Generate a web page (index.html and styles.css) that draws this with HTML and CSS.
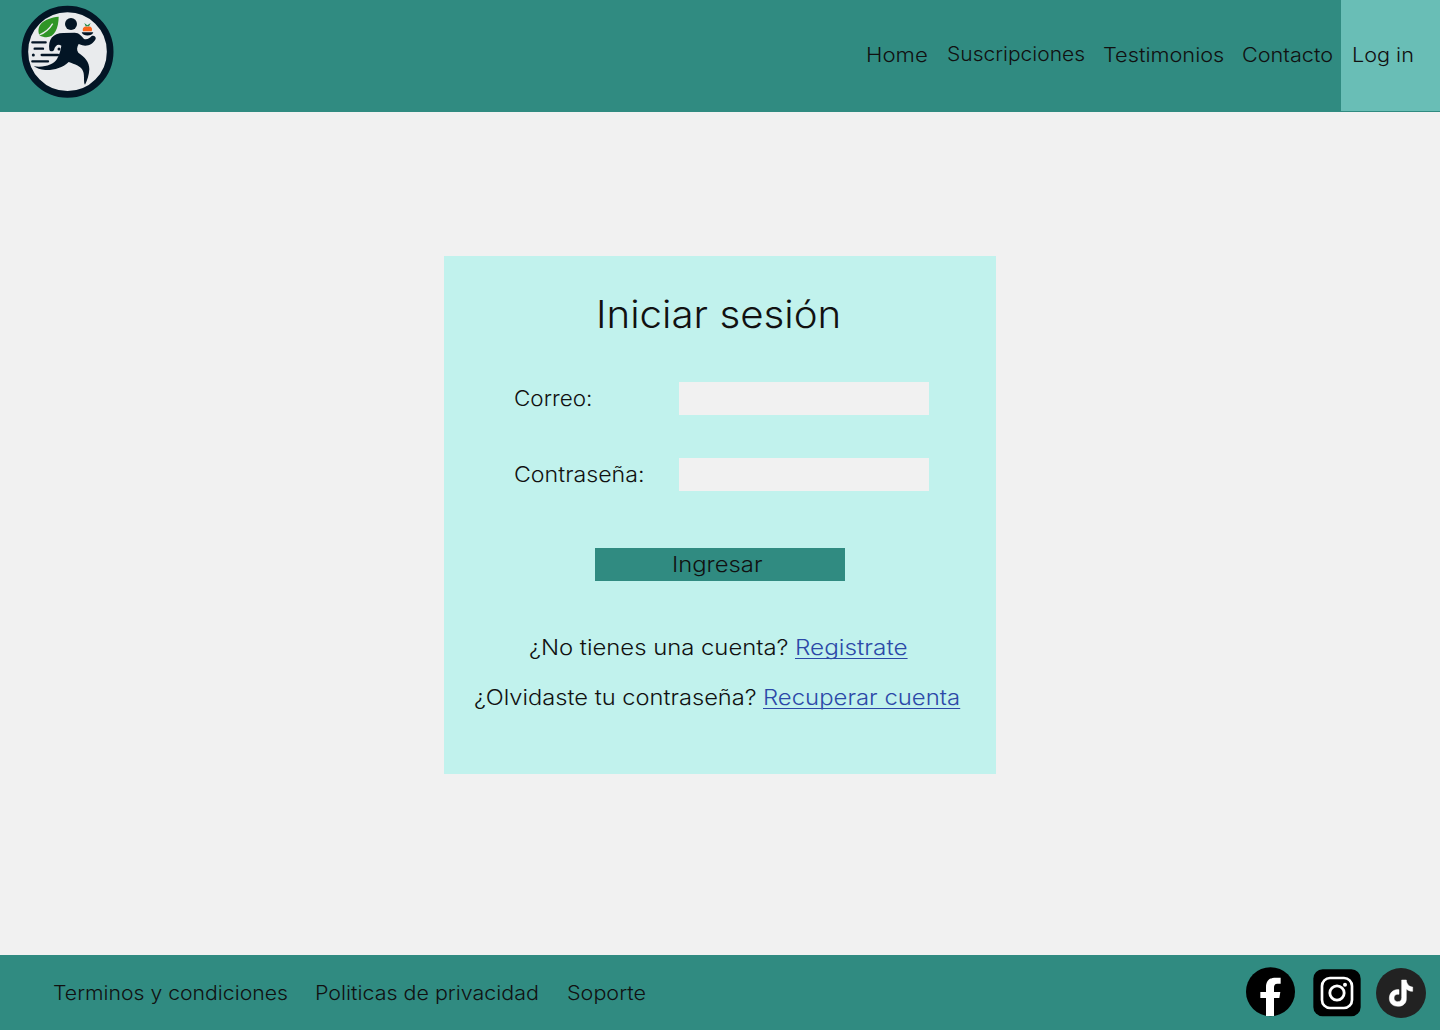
FILE: index.html
```html
<!DOCTYPE html>
<html lang="es">
<head>
<meta charset="utf-8">
<title>Iniciar sesión</title>
<link rel="stylesheet" href="styles.css">
</head>
<body>
<header class="header">
  <a class="logo" href="#" aria-label="Inicio">
    <svg viewBox="0 0 345 336" width="115" height="112">
      <circle cx="172.500" cy="155" r="128" fill="#e9ebed" stroke="#031525" stroke-width="20"/>
      <path d="M88 105C78 75 100 55 146 50C146 88 130 119 99 110L91 108Z" fill="#2f9526"/>
      <path d="M88 105C106 98 119 86 128 71" fill="none" stroke="#e9ebed" stroke-width="4"/>
      <g fill="#031525">
        <circle cx="183" cy="72" r="18"/>
        <path d="M118 149C114 119 128 99 160 99L194 98C207 98 216 109 222 117C231 120 239 115 245 108C251 105 259 109 257 117C249 132 234 140 217 136L206 132C201 141 199 150 205 158C225 171 238 186 238 208C237 226 232 241 225 254C220 248 224 229 220 216C214 197 194 193 176 186C157 204 132 211 106 210C91 209 80 205 71 199C106 203 130 194 141 177C149 162 152 150 154 137C145 130 135 136 132 150C129 155 120 155 118 149Z"/>
        <path d="M215 97H250C246 110 219 110 215 97Z"/>
        <circle cx="70" cy="165" r="4.500"/><circle cx="147" cy="147" r="4.500"/>
      </g>
      <path d="M67 127H107M74 146H99M95 165H144M67 184H114" stroke="#031525" stroke-width="7" stroke-linecap="round"/>
      <path d="M219 94C216 82 224 78 233 80C243 78 249 85 245 94Z" fill="#fa651b"/>
      <path d="M223 69L232 76L242 69L237 79H227Z" fill="#278b48"/>
    </svg>
  </a>
  <nav class="nav">
    <a class="nav-link nav-home" href="#"><span class="wide">Home</span></a>
    <a class="nav-link nav-plans" href="#"><span class="wide">Suscripciones</span></a>
    <a class="nav-link nav-reviews" href="#"><span class="wide">Testimonios</span></a>
    <a class="nav-link nav-contact" href="#"><span class="wide">Contacto</span></a>
    <a class="nav-link nav-login" href="#"><span class="wide">Log in</span></a>
  </nav>
</header>
<main class="main">
  <form class="card">
    <h1 class="title"><span class="wide">Iniciar sesión</span></h1>
    <div class="field"><label class="label label-mail" for="mail"><span class="wide">Correo:</span></label><input class="input" id="mail" type="email"></div>
    <div class="field"><label class="label label-pass" for="pass"><span class="wide">Contraseña:</span></label><input class="input" id="pass" type="password"></div>
    <button class="submit" type="button"><span class="wide">Ingresar</span></button>
    <p class="help help-register"><span class="ask"><span class="wide">¿No tienes una cuenta?</span></span><a class="help-link wide" href="#">Registrate</a></p>
    <p class="help help-recover"><span class="ask"><span class="wide">¿Olvidaste tu contraseña?</span></span><a class="help-link wide" href="#">Recuperar cuenta</a></p>
  </form>
</main>
<footer class="footer">
  <div class="legal">
    <a class="legal-link legal-terms" href="#"><span class="wide">Terminos y condiciones</span></a>
    <a class="legal-link legal-privacy" href="#"><span class="wide">Politicas de privacidad</span></a>
    <a class="legal-link legal-support" href="#"><span class="wide">Soporte</span></a>
  </div>
  <div class="social">
    <svg viewBox="0 0 615 225" width="205" height="75">
      <circle cx="106.500" cy="110" r="73.500" fill="#000"/>
      <path d="M93 183V129H76V111H93V97C93 76 105 68 122 68H137V86H127C119 86 117 91 117 98V111H136L133 129H117V183Z" fill="#fff"/>
      <rect x="235" y="43" width="142" height="141" rx="28" fill="#000"/>
      <rect x="261" y="69" width="90" height="90" rx="24" fill="none" stroke="#fff" stroke-width="8"/>
      <circle cx="306" cy="114" r="21.500" fill="none" stroke="#fff" stroke-width="8.500"/>
      <circle cx="330" cy="89" r="6" fill="#fff"/>
      <circle cx="498" cy="114" r="75" fill="#222"/>
      <path d="M500 75H514C515 88 522 95 533 96V109C525 109 519 106 514 102V131C514 145 504 154 489 154C474 154 463 145 463 130C463 114 475 102 492 104V118C483 116 477 121 477 129C477 136 482 140 488 140C496 140 500 135 500 128Z" fill="#fff" stroke="#fff" stroke-width="1.500"/>
    </svg>
  </div>
</footer>
</body>
</html>
```
FILE: styles.css
```css
* { box-sizing: border-box; }

body {
  margin: 0;
  min-height: 1030px;
  display: flex;
  flex-direction: column;
  background: #f1f1f1;
  color: #111;
  font-family: Inter, "Open Sans", sans-serif;
  font-weight: 350;
}

a { color: inherit; text-decoration: none; }

/* Extended letterforms; each label sets its own --stretch. */
.wide {
  display: inline-block;
  transform: scaleX(var(--stretch, 1.1));
  transform-origin: left center;
}

.header {
  height: 112px;
  display: flex;
  justify-content: space-between;
  padding-left: 10px;
  background: #308b81;
}

.logo { display: block; width: 115px; height: 112px; }
.logo svg, .social svg { display: block; }

.nav { display: flex; height: 111px; }

.nav-link {
  font-size: 19.500px;
  line-height: 110px;
  white-space: nowrap;
}

.nav-home { width: 81px; --stretch: 1.138; }
.nav-plans { width: 156px; line-height: 108px; --stretch: 1.078; }
.nav-reviews { width: 139px; --stretch: 1.115; }
.nav-contact { width: 99px; --stretch: 1.11; }
.nav-login { width: 99px; padding-left: 11px; background: #69beb6; --stretch: 1.108; }

.main {
  flex: 1;
  display: flex;
  justify-content: center;
  align-items: flex-start;
  padding-top: 144px;
}

.card {
  width: 552px;
  height: 518px;
  padding-top: 34px;
  display: flex;
  flex-direction: column;
  background: #c1f2ed;
}

.title {
  margin: 0 0 42px;
  padding-left: 152px;
  font-size: 37.500px;
  font-weight: 350;
  line-height: 50px;
  white-space: nowrap;
  --stretch: 1.073;
}

.field { display: flex; height: 33px; margin-bottom: 43px; padding-left: 70px; }

.label {
  width: 165px;
  font-size: 21.300px;
  line-height: 33px;
}

.label-mail { --stretch: 1.054; }
.label-pass { --stretch: 1.088; }

.input { width: 250px; height: 33px; border: 0; padding: 0 8px; background: #f1f1f1; font: inherit; }

.submit {
  width: 250px;
  height: 33px;
  margin: 14px 0 50px 151px;
  padding: 0 0 0 77px;
  border: 0;
  background: #308b81;
  color: #111;
  font-family: inherit;
  font-size: 21.300px;
  font-weight: 350;
  line-height: 33px;
  text-align: left;
  --stretch: 1.118;
}

.help {
  display: flex;
  margin: 0 0 17px;
  font-size: 21.300px;
  line-height: 33px;
  white-space: nowrap;
}

.help-register { padding-left: 85px; }
.help-register .ask { width: 266px; --stretch: 1.119; }
.help-register .help-link { --stretch: 1.142; }
.help-recover { padding-left: 30px; }
.help-recover .ask { width: 289px; --stretch: 1.11; }
.help-recover .help-link { --stretch: 1.1225; }

.help-link {
  color: #2c49a8;
  text-decoration: underline;
  text-decoration-thickness: 1px;
  text-decoration-skip-ink: none;
  text-underline-offset: 3px;
}

.footer {
  height: 75px;
  display: flex;
  justify-content: space-between;
  background: #308b81;
}

.legal { display: flex; padding-left: 53px; }

.legal-link {
  font-size: 19.500px;
  line-height: 76px;
  white-space: nowrap;
}

.legal-terms { width: 262px; --stretch: 1.088; }
.legal-privacy { width: 252px; --stretch: 1.1; }
.legal-support { --stretch: 1.105; }
```
